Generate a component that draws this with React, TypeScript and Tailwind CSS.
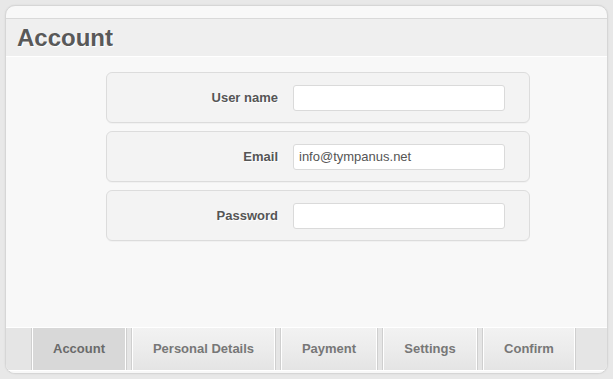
const tabs = [
  { label: "Account", width: "w-[96px]", active: true },
  { label: "Personal Details", width: "w-[145px]", active: false },
  { label: "Payment", width: "w-[98px]", active: false },
  { label: "Settings", width: "w-[96px]", active: false },
  { label: "Confirm", width: "w-[94px]", active: false },
];

const fields = [
  { label: "User name", value: "" },
  { label: "Email", value: "info@tympanus.net" },
  { label: "Password", value: "" },
];

export default function App() {
  return (
    <div className="h-[379px] w-[613px] bg-[#e8e8e8] pl-[5px] pt-[5px] font-['Liberation_Sans',Arial,sans-serif]">
      <div className="flex h-[369px] w-[603px] flex-col overflow-hidden rounded-[10px] border border-[#d6d6d6] bg-[#f8f8f8] shadow-[0_0_2px_rgba(0,0,0,0.08)]">
        {/* Header */}
        <div className="mt-[12px] flex h-[39px] items-center border-t border-b border-t-[#d9d9d9] border-b-white bg-[#efefef] pl-[11px]">
          <h1 className="text-[24px] font-bold leading-none text-[#595959] [text-shadow:1px_1px_1px_#fff]">
            Account
          </h1>
        </div>

        {/* Form fields */}
        <div className="flex h-[270px] flex-col gap-[8px] pl-[100px] pt-[15px]">
          {fields.map((field) => (
            <div
              key={field.label}
              className="flex h-[51px] w-[424px] items-center rounded-[6px] border border-[#dcdcdc] bg-[#f3f3f3] shadow-[0_1px_1px_rgba(0,0,0,0.03)]"
            >
              <label className="w-[171px] text-right text-[13px] font-bold text-[#555] [text-shadow:1px_1px_1px_#fff]">
                {field.label}
              </label>
              <div className="ml-[15px] flex h-[26px] w-[212px] items-center rounded-[3px] border border-[#dadada] bg-white pl-[5px] text-[13px] text-[#555]">
                {field.value}
              </div>
            </div>
          ))}
        </div>

        {/* Tabs */}
        <div className="flex h-[43px] border-t border-white bg-[#e5e5e5] pl-[25px]">
          {tabs.map((tab, i) => (
            <div
              key={tab.label}
              className={`${tab.width} ${i > 0 ? "ml-[4px]" : ""} flex h-full items-center justify-center border-x border-[#cfcfcf] shadow-[inset_1px_0_#fff,inset_-1px_0_#fff] text-[13px] font-bold ${
                tab.active
                  ? "bg-[#d8d8d8] text-[#6a6a6a]"
                  : "bg-gradient-to-b from-[#f2f2f2] via-[#ececec] to-[#e4e4e4] text-[#777]"
              }`}
            >
              {tab.label}
            </div>
          ))}
        </div>
        <div className="h-[3px] border-t border-white bg-[#f8f8f8]" />
      </div>
    </div>
  );
}
